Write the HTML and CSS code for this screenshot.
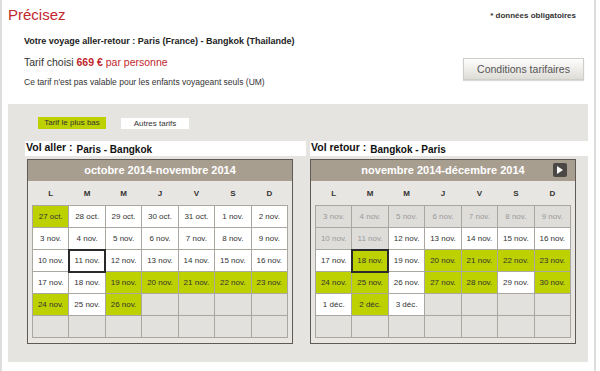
FILE: index.html
```html
<!DOCTYPE html>
<html lang="fr">
<head>
    <meta charset="UTF-8">
    <meta name="viewport" content="width=device-width, initial-scale=1.0">
    <title>Précisez</title>
    <link rel="stylesheet" href="styles.css">
</head>
<body>

    <div class="page">
        <div class="header">
            <h1 class="title">Précisez</h1>
            <span class="required">* données obligatoires</span>
        </div>

        <div class="info">
            <p class="trip">Votre voyage aller-retour : Paris (France) - Bangkok (Thailande)</p>
            <div class="price-row">
                <div>
                    <p class="price">Tarif choisi <strong>669 €</strong> <span class="red">par personne</span></p>
                    <p class="note">Ce tarif n'est pas valable pour les enfants voyageant seuls (UM)</p>
                </div>
                <button class="btn-conditions">Conditions tarifaires</button>
            </div>
        </div>

        <div class="panel">
            <!-- onglets tarifs -->
            <div class="tabs">
                <span class="tab active">Tarif le plus bas</span>
                <span class="tab">Autres tarifs</span>
            </div>

            <div class="flights">
                <div class="flight">
                    <div class="strip">
                        <span class="strip-label">Vol aller :</span>
                        <span class="strip-value">Paris - Bangkok</span>
                    </div>
                    <div class="calendar calendar-out">
                        <div class="cal-head">octobre 2014-novembre 2014</div>
                        <div class="cal-body">
                            <table class="grid">
                                <thead>
                                    <tr><th>L</th><th>M</th><th>M</th><th>J</th><th>V</th><th>S</th><th>D</th></tr>
                                </thead>
                                <tbody>
                                    <tr><td class="low">27 oct.</td><td class="day">28 oct.</td><td class="day">29 oct.</td><td class="day">30 oct.</td><td class="day">31 oct.</td><td class="day">1 nov.</td><td class="day">2 nov.</td></tr>
                                    <tr><td class="day">3 nov.</td><td class="day">4 nov.</td><td class="day">5 nov.</td><td class="day">6 nov.</td><td class="day">7 nov.</td><td class="day">8 nov.</td><td class="day">9 nov.</td></tr>
                                    <tr><td class="day">10 nov.</td><td class="day sel">11 nov.</td><td class="day">12 nov.</td><td class="day">13 nov.</td><td class="day">14 nov.</td><td class="day">15 nov.</td><td class="day">16 nov.</td></tr>
                                    <tr><td class="day">17 nov.</td><td class="day">18 nov.</td><td class="low">19 nov.</td><td class="low">20 nov.</td><td class="low">21 nov.</td><td class="low">22 nov.</td><td class="low">23 nov.</td></tr>
                                    <tr><td class="low">24 nov.</td><td class="day">25 nov.</td><td class="low">26 nov.</td><td></td><td></td><td></td><td></td></tr>
                                    <tr><td></td><td></td><td></td><td></td><td></td><td></td><td></td></tr>
                                </tbody>
                            </table>
                        </div>
                    </div>
                </div>

                <div class="flight">
                    <div class="strip">
                        <span class="strip-label">Vol retour :</span>
                        <span class="strip-value">Bangkok - Paris</span>
                    </div>
                    <div class="calendar">
                        <div class="cal-head">novembre 2014-décembre 2014</div>
                        <span class="cal-next">
                            <svg width="6" height="8" viewBox="0 0 6 8"><path d="M0 0 L6 4 L0 8 Z" fill="#fff"/></svg>
                        </span>
                        <div class="cal-body">
                            <table class="grid">
                                <thead>
                                    <tr><th>L</th><th>M</th><th>M</th><th>J</th><th>V</th><th>S</th><th>D</th></tr>
                                </thead>
                                <tbody>
                                    <tr><td class="off">3 nov.</td><td class="off">4 nov.</td><td class="off">5 nov.</td><td class="off">6 nov.</td><td class="off">7 nov.</td><td class="off">8 nov.</td><td class="off">9 nov.</td></tr>
                                    <tr><td class="off">10 nov.</td><td class="off">11 nov.</td><td class="day">12 nov.</td><td class="day">13 nov.</td><td class="day">14 nov.</td><td class="day">15 nov.</td><td class="day">16 nov.</td></tr>
                                    <tr><td class="day">17 nov.</td><td class="low sel">18 nov.</td><td class="day">19 nov.</td><td class="low">20 nov.</td><td class="low">21 nov.</td><td class="low">22 nov.</td><td class="low">23 nov.</td></tr>
                                    <tr><td class="low">24 nov.</td><td class="low">25 nov.</td><td class="day">26 nov.</td><td class="low">27 nov.</td><td class="low">28 nov.</td><td class="day">29 nov.</td><td class="low">30 nov.</td></tr>
                                    <tr><td class="day">1 déc.</td><td class="low">2 déc.</td><td class="day">3 déc.</td><td></td><td></td><td></td><td></td></tr>
                                    <tr><td></td><td></td><td></td><td></td><td></td><td></td><td></td></tr>
                                </tbody>
                            </table>
                        </div>
                    </div>
                </div>
            </div>
        </div>
    </div>

</body>
</html>
```

FILE: styles.css
```css
body {
    margin: 0;
    background: #fff;
    font-family: "Liberation Sans", Arial, sans-serif;
    color: #222;
}
p {
    margin: 0;
}
.page {
    width: 592px;
    min-height: 371px;
    border-left: 2px solid #ddd;
    border-right: 2px solid #ddd;
}
.header {
    display: flex;
    justify-content: space-between;
    align-items: flex-start;
    padding: 0 18px 0 6px;
}
.title {
    margin: 6px 0 0;
    font-size: 15px;
    line-height: 18px;
    font-weight: normal;
    color: #c1272d;
}
.required {
    margin-top: 11px;
    font-size: 8px;
    line-height: 10px;
    font-weight: bold;
    color: #333;
}
.info {
    padding: 0 10px 0 22px;
}
.trip {
    margin-top: 11px;
    font-size: 9px;
    line-height: 12px;
    font-weight: bold;
}
.price-row {
    display: flex;
    justify-content: space-between;
    align-items: flex-start;
    margin-top: 9px;
}
.price {
    font-size: 10.5px;
    line-height: 13px;
    color: #333;
}
.price strong, .red {
    color: #c1272d;
}
.note {
    margin-top: 8px;
    font-size: 8.5px;
    line-height: 11px;
    color: #333;
}
.btn-conditions {
    margin-top: 2px;
    width: 121px;
    height: 22px;
    padding: 0;
    border: 1px solid #cfcfca;
    background: linear-gradient(#fefefe, #dedcd6);
    box-shadow: 0 1px 1px rgba(0, 0, 0, 0.15);
    font-family: inherit;
    font-size: 10.5px;
    color: #555;
}
/* bloc calendriers */
.panel {
    margin: 16px 6px 0;
    padding: 13px 0 18px 17px;
    background: #e6e4e0;
}
.tabs {
    display: flex;
    gap: 15px;
    margin-left: 13px;
}
.tab {
    width: 68px;
    height: 11px;
    margin-top: 1px;
    background: #fff;
    font-size: 8px;
    line-height: 11px;
    text-align: center;
    color: #333;
}
.tab.active {
    height: 12px;
    margin-top: 0;
    line-height: 12px;
    background: #bdd000;
}
.flights {
    display: flex;
    gap: 4px;
    margin-top: 12px;
}
.flight:first-child {
    width: 281px;
}
.flight {
    width: 278px;
}
.strip {
    display: flex;
    gap: 4px;
    height: 15px;
    padding-left: 1px;
    background: #fff;
    font-weight: bold;
    color: #111;
}
.strip-label {
    font-size: 10.5px;
    line-height: 12px;
}
.strip-value {
    margin-top: 3px;
    font-size: 10px;
    line-height: 12px;
}
.calendar {
    position: relative;
    width: 264px;
    margin-top: 3px;
    border: 1px solid #5f5a55;
    background: #e8e6e2;
}
.calendar-out {
    margin-left: 2px;
}
.cal-head {
    height: 21px;
    background: #a89e90;
    color: #fff;
    font-size: 11px;
    font-weight: bold;
    line-height: 21px;
    text-align: center;
}
.cal-next {
    position: absolute;
    top: 3px;
    right: 8px;
    display: flex;
    align-items: center;
    justify-content: center;
    width: 14px;
    height: 14px;
    border-radius: 2px;
    background: #4a4744;
}
.cal-body {
    padding: 0 4px 5px;
}
.grid {
    width: 256px;
    table-layout: fixed;
    border-collapse: collapse;
}
.grid th {
    height: 24px;
    padding: 0;
    font-size: 8px;
    font-weight: bold;
    color: #333;
    text-align: center;
}
.grid td {
    height: 21px;
    padding: 0;
    border: 1px solid #aaa6a0;
    background: #e3e1dd;
    font-size: 8px;
    color: #333;
    text-align: center;
}
.grid td.day {
    background: #fff;
}
.grid td.low {
    background: #bdd000;
}
.grid td.off {
    background: #dfddd9;
    color: #999;
}
.grid td.sel {
    outline: 2px solid #2a2a2a;
    outline-offset: -1px;
}
```
